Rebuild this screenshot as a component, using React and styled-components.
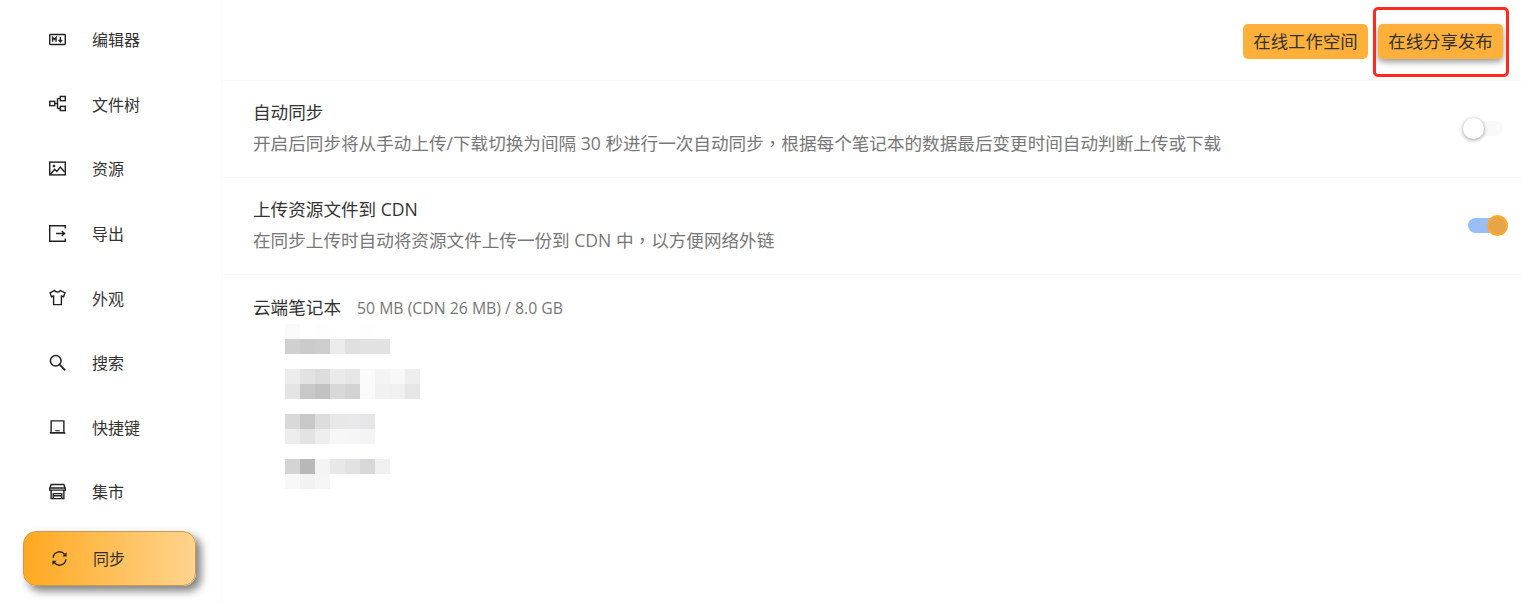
import React from 'react'
import styled, { createGlobalStyle } from 'styled-components'

const Global = createGlobalStyle`
  html, body {
    margin: 0;
    padding: 0;
    background: #fff;
    font-family: "Open Sans", "Noto Sans CJK SC", sans-serif;
  }
  * { box-sizing: border-box; }
`

const Page = styled.div`
  display: flex;
  width: 1522px;
  height: 604px;
  overflow: hidden;
`

const Sidebar = styled.nav`
  width: 222px;
  flex: none;
  padding: 7px 0 0 23px;
  border-right: 1px solid #fbfbfb;
`

const MenuItem = styled.div`
  display: flex;
  align-items: center;
  gap: ${p => (p.$active ? '25px' : '26px')};
  width: 173px;
  height: ${p => (p.$active ? '55px' : '64.6px')};
  margin-top: ${p => (p.$active ? '7px' : '0')};
  padding-left: ${p => (p.$active ? '27px' : '26px')};
  border: ${p => (p.$active ? '1px solid #c99a55' : 'none')};
  border-radius: 13px;
  background: ${p => (p.$active ? 'linear-gradient(90deg, #ffa920, #ffd48e)' : 'none')};
  box-shadow: ${p => (p.$active ? '5px 5px 8px rgba(0, 0, 0, 0.5)' : 'none')};
  color: #333;
  font-size: 16px;
  svg {
    flex: none;
    width: 17px;
    height: 17px;
    fill: none;
    stroke: #222;
  }
`

const Main = styled.main`
  flex: 1;
  min-width: 0;
`

const Toolbar = styled.header`
  position: relative;
  display: flex;
  justify-content: flex-end;
  gap: 10px;
  height: 81px;
  padding: 24px 19px 0 0;
  border-bottom: 1px solid #fafafa;
`

const ActionButton = styled.button`
  width: 125px;
  height: 35px;
  padding: 0 0 2px;
  border: none;
  border-radius: 5px;
  background: #ffb03b;
  box-shadow: ${p => (p.$raised ? '0 3px 6px rgba(0, 0, 0, 0.4)' : 'none')};
  color: #333;
  font-family: inherit;
  font-size: 17.4px;
`

const Highlight = styled.div`
  position: absolute;
  top: 7px;
  right: 13px;
  width: 136px;
  height: 70px;
  border: 3px solid #ff2a1f;
  border-radius: 5px;
  pointer-events: none;
`

const SettingRow = styled.section`
  display: flex;
  align-items: center;
  justify-content: space-between;
  height: 97px;
  padding: 1px 14px 4px 31px;
  border-bottom: 1px solid #fafafa;
`

const Switch = styled.div`
  margin-top: 1px;
`

const Title = styled.div`
  color: #333;
  font-size: 17.6px;
  line-height: 24px;
`

const Desc = styled.div`
  margin-top: 7px;
  color: #777;
  font-size: 17.6px;
  line-height: 24px;
`

// 参考图里的全角逗号是居中的
const Comma = styled.span`
  font-family: "Noto Sans CJK TC", sans-serif;
`

const Track = styled.div`
  position: relative;
  width: 40px;
  height: 15px;
  margin-right: ${p => (p.$on ? '0' : '5px')};
  border-radius: 8px;
  background: ${p => (p.$on ? '#99bdf7' : '#f9f9f9')};
`

const Knob = styled.div`
  position: absolute;
  top: -3px;
  ${p => (p.$on ? 'right: 0;' : 'left: 0;')}
  width: 21px;
  height: 21px;
  border-radius: 50%;
  border: ${p => (p.$on ? '2px solid #ffa92c' : 'none')};
  background: ${p => (p.$on ? '#e5a548' : '#fff')};
  box-shadow: ${p => (p.$on ? 'none' : '0 1px 4px rgba(0, 0, 0, 0.4)')};
`

const Cloud = styled.section`
  padding: 20px 0 0 31px;
`

const CloudHead = styled.div`
  display: flex;
  align-items: baseline;
  gap: 16px;
`

const Usage = styled.span`
  color: #777;
  font-size: 15.8px;
`

const Mosaic = styled.div`
  display: grid;
  grid-template-columns: repeat(9, 15px);
  grid-auto-rows: 15px;
  margin: 5px 0 0 32px;
`

const Cell = styled.div`
  background: ${p => p.$c || 'transparent'};
`

const blur = [
  ['#fafafa', '', '#fefefe', '', '', '#fefefe'],
  ['#d0d0d0', '#cbcbcb', '#cdcdcd', '#ebebeb', '#e0e0e0', '#e2e2e3', '#e2e2e3'],
  [],
  ['#ececec', '#e2e2e2', '#dcdcdc', '#eaeaea', '#e6e6e6', '#fbfbfb', '#f4f4f4', '#f7f8f7', '#eeeeee'],
  ['#e4e4e4', '#c8c8c8', '#c2c2c2', '#d8d8d8', '#d2d2d2', '#fafafa', '#f1f1f1', '#f0f0f0', '#e6e6e6'],
  [],
  ['#d9d9d9', '#c8c8c8', '#dddddd', '#e8e8e8', '#e9e9eb', '#e6e6e8'],
  ['#ededed', '#e3e3e3', '#eeeeee', '#f7f7f7', '#f6f6f6', '#f4f4f4'],
  [],
  ['#d4d4d4', '#b8b8b8', '#f4f4f4', '#e8e8e8', '#e2e2e2', '#d8d8da', '#f0f0f0'],
  ['#f8f8f8', '#f2f2f2', '#f5f5f5'],
]

const icons = {
  markdown: (
    <>
      <rect x="1" y="5" width="22" height="14" rx="1" strokeWidth="2" />
      <path d="M5 15V9l2.500 3L10 9v6M16 8.500V15M13.500 12.500l2.500 3 2.500-3" strokeWidth="2" />
    </>
  ),
  tree: (
    <>
      <rect x="1" y="9" width="7" height="6" strokeWidth="2" />
      <rect x="16" y="2" width="7" height="6" strokeWidth="2" />
      <rect x="16" y="16" width="7" height="6" strokeWidth="2" />
      <path d="M8 12h4M12 5v14M12 5h4M12 19h4" strokeWidth="2" />
    </>
  ),
  image: (
    <>
      <rect x="1" y="3" width="22" height="18" strokeWidth="2" />
      <circle cx="7" cy="8.500" r="1.500" fill="#222" />
      <path d="M2 20l6-7 3 3 5-6 6 7" strokeWidth="2" />
    </>
  ),
  exit: <path d="M23 5V1H1v22h22v-4M10 12h12M18 8.500l4 3.500-4 3.500" strokeWidth="2" />,
  shirt: <path d="M8 2L1.500 5.500 3.500 11l3-1v12h11V10l3 1 2-5.500L16 2c-1 3-7 3-8 0z" strokeWidth="2" />,
  search: (
    <>
      <circle cx="9.500" cy="9.500" r="7.500" strokeWidth="2.200" />
      <path d="M15 15l8 8" strokeWidth="2.400" />
    </>
  ),
  laptop: (
    <>
      <path d="M3 20V4h18v16" strokeWidth="2" />
      <path d="M1 21h22" strokeWidth="2.400" />
      <path d="M9 18h6" strokeWidth="1.600" />
    </>
  ),
  store: (
    <>
      <path d="M3 2h18l2 6v2H1V8zM3 10v12h18V10M1 7h22" strokeWidth="2" />
      <path d="M6 22v-7h12v7M6 18h12" strokeWidth="2" />
    </>
  ),
  sync: (
    <>
      <path d="M3 11a9 9 0 0 1 16-5M21 13a9 9 0 0 1-16 5" strokeWidth="2" />
      <path d="M22 3v6h-6zM2 21v-6h6z" fill="#222" stroke="none" />
    </>
  ),
}

const menu = [
  ['markdown', '编辑器'],
  ['tree', '文件树'],
  ['image', '资源'],
  ['exit', '导出'],
  ['shirt', '外观'],
  ['search', '搜索'],
  ['laptop', '快捷键'],
  ['store', '集市'],
  ['sync', '同步'],
]

export default function App() {
  return (
    <Page>
      <Global />
      <Sidebar>
        {menu.map(([icon, label]) => (
          <MenuItem key={label} $active={label === '同步'}>
            <svg viewBox="0 0 24 24">{icons[icon]}</svg>
            {label}
          </MenuItem>
        ))}
      </Sidebar>
      <Main>
        <Toolbar>
          <ActionButton>在线工作空间</ActionButton>
          <ActionButton $raised>在线分享发布</ActionButton>
          <Highlight />
        </Toolbar>
        <SettingRow>
          <div>
            <Title>自动同步</Title>
            <Desc>开启后同步将从手动上传/下载切换为间隔 30 秒进行一次自动同步<Comma>，</Comma>根据每个笔记本的数据最后变更时间自动判断上传或下载</Desc>
          </div>
          <Switch>
            <Track>
              <Knob />
            </Track>
          </Switch>
        </SettingRow>
        <SettingRow>
          <div>
            <Title>上传资源文件到 CDN</Title>
            <Desc>在同步上传时自动将资源文件上传一份到 CDN 中<Comma>，</Comma>以方便网络外链</Desc>
          </div>
          <Switch>
            <Track $on>
              <Knob $on />
            </Track>
          </Switch>
        </SettingRow>
        <Cloud>
          <CloudHead>
            <Title>云端笔记本</Title>
            <Usage>50 MB (CDN 26 MB) / 8.0 GB</Usage>
          </CloudHead>
          <Mosaic>
            {blur.flatMap((row, r) =>
              Array.from({ length: 9 }, (_, i) => <Cell key={`${r}-${i}`} $c={row[i]} />)
            )}
          </Mosaic>
        </Cloud>
      </Main>
    </Page>
  )
}
